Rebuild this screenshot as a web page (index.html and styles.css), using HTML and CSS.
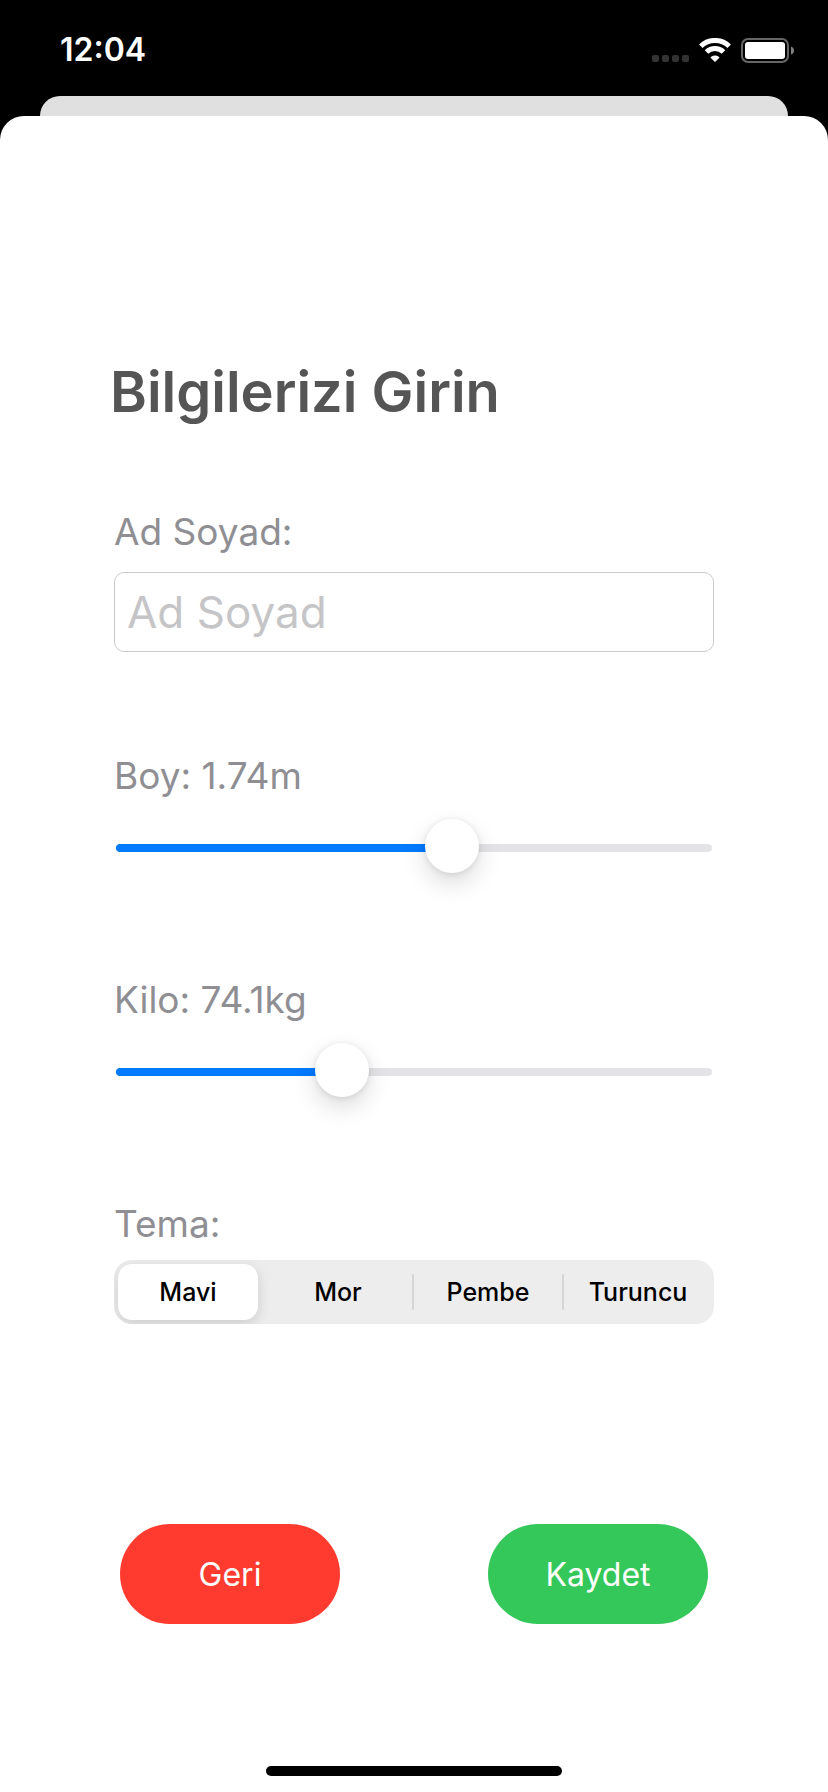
FILE: index.html
```html
<!DOCTYPE html>
<html lang="tr">
<head>
  <meta charset="utf-8">
  <meta name="viewport" content="width=device-width, initial-scale=1">
  <title>Bilgilerizi Girin</title>
  <link rel="stylesheet" href="styles.css">
</head>
<body>
  <header class="status-bar">
    <time class="clock">12:04</time>
    <div class="status-icons">
      <svg class="icon-signal" viewBox="0 0 37 24" aria-hidden="true">
        <rect x="0" y="17" width="7" height="7" rx="2"/>
        <rect x="10" y="17" width="7" height="7" rx="2"/>
        <rect x="20" y="17" width="7" height="7" rx="2"/>
        <rect x="30" y="17" width="7" height="7" rx="2"/>
      </svg>
      <svg class="icon-wifi" viewBox="0 0 32 24" aria-hidden="true">
        <path class="wifi-arc" d="M1.8 8.2A20.4 20.4 0 0 1 30.2 8.2"/>
        <path class="wifi-arc" d="M7.5 14A12.2 12.2 0 0 1 24.5 14"/>
        <path class="wifi-dot" d="M16 24l-4.6-4.4q.2-.4.8-.8a6.4 6.4 0 0 1 7.600 0q.6.4.8.8z"/>
      </svg>
      <svg class="icon-battery" viewBox="0 0 53 25" aria-hidden="true">
        <rect class="battery-case" x="1" y="1" width="46" height="23" rx="6"/>
        <rect class="battery-level" x="4" y="4" width="40" height="17" rx="3"/>
        <path class="battery-cap" d="M50 8.500q3 1 3 4t-3 4z"/>
      </svg>
    </div>
  </header>

  <div class="sheet-behind"></div>

  <main class="sheet">
    <form class="form">
      <h1 class="title">Bilgilerizi Girin</h1>

      <div class="field">
        <label class="label" for="name">Ad Soyad:</label>
        <input class="text-input" id="name" type="text" placeholder="Ad Soyad">
      </div>

      <div class="field">
        <label class="label" for="height">Boy: 1.74m</label>
        <input class="slider" id="height" type="range" min="1" max="2.3" step="0.01" value="1.74" style="--fill: 57%">
      </div>

      <div class="field">
        <label class="label" for="weight">Kilo: 74.1kg</label>
        <input class="slider" id="weight" type="range" min="30" max="150" step="0.1" value="74.1" style="--fill: 37%">
      </div>

      <fieldset class="field theme">
        <legend class="label">Tema:</legend>
        <div class="segments">
          <label class="segment"><input class="segment-radio" type="radio" name="theme" checked><span class="segment-text">Mavi</span></label>
          <label class="segment"><input class="segment-radio" type="radio" name="theme"><span class="segment-text">Mor</span></label>
          <label class="segment"><input class="segment-radio" type="radio" name="theme"><span class="segment-text">Pembe</span></label>
          <label class="segment"><input class="segment-radio" type="radio" name="theme"><span class="segment-text">Turuncu</span></label>
        </div>
      </fieldset>

      <div class="actions">
        <button class="button button-back" type="button">Geri</button>
        <button class="button button-save" type="button">Kaydet</button>
      </div>
    </form>
    <div class="home-indicator"></div>
  </main>
</body>
</html>
```

FILE: styles.css
```css
* {
  box-sizing: border-box;
}

body {
  margin: 0;
  min-height: 100vh;
  display: flex;
  flex-direction: column;
  background: #000;
  font-family: Inter, "Liberation Sans", sans-serif;
}

/* Status bar */
.status-bar {
  display: flex;
  justify-content: space-between;
  align-items: center;
  height: 96px;
  padding: 4px 34px 0 60px;
  color: #fff;
}

.clock {
  font-size: 32px;
  line-height: 40px;
  font-weight: 600;
}

.status-icons {
  display: flex;
  align-items: center;
  gap: 10px;
}

.icon-signal {
  width: 37px;
  height: 24px;
  fill: #333;
}

.icon-wifi {
  width: 32px;
  height: 24px;
}

.wifi-arc {
  fill: none;
  stroke: #fff;
  stroke-width: 5;
}

.wifi-dot,
.battery-level {
  fill: #fff;
}

.icon-battery {
  width: 53px;
  height: 25px;
}

.battery-case {
  fill: none;
  stroke: #666;
  stroke-width: 2;
}

.battery-cap {
  fill: #808080;
}

/* Sheets */
.sheet-behind {
  height: 20px;
  margin: 0 40px;
  border-radius: 20px 20px 0 0;
  background: #e0e0e0;
}

.sheet {
  flex: 1;
  display: flex;
  flex-direction: column;
  justify-content: space-between;
  padding: 240px 0 16px;
  border-radius: 24px 24px 0 0;
  background: #fff;
}

.form {
  padding: 0 110px;
}

.title {
  margin: 0 0 80px;
  font-size: 56px;
  line-height: 72px;
  font-weight: 600;
  color: #555;
}

.field {
  display: flex;
  flex-direction: column;
  gap: 16px;
  margin: 0 4px 96px;
}

.label {
  padding: 0;
  font-size: 37px;
  line-height: 48px;
  color: #8e8e93;
}

.text-input {
  width: 100%;
  height: 80px;
  margin-bottom: 4px;
  padding: 0 12px;
  border: 1px solid #ccc;
  border-radius: 10px;
  background: #fff;
  font-family: inherit;
  font-size: 44px;
  color: #000;
}

.text-input::placeholder {
  color: #c5c5c7;
  opacity: 1;
}

/* Sliders */
.slider {
  appearance: none;
  height: 64px;
  margin: 0 2px;
  background: transparent;
}

.slider::-webkit-slider-runnable-track {
  height: 8px;
  border-radius: 4px;
  background: linear-gradient(to right, #007aff var(--fill), #e4e4e6 var(--fill));
}

.slider::-webkit-slider-thumb {
  appearance: none;
  width: 54px;
  height: 54px;
  margin-top: -25px;
  border-radius: 50%;
  background: #fff;
  box-shadow: 0 10px 24px rgba(0, 0, 0, 0.14), 0 1px 6px rgba(0, 0, 0, 0.1);
}

/* Segmented control */
.theme {
  display: block;
  min-width: 0;
  margin-bottom: 200px;
  padding: 0;
  border: 0;
}

.segments {
  display: grid;
  grid-template-columns: repeat(4, 1fr);
  height: 64px;
  margin-top: 12px;
  border-radius: 18px;
  background: #ededee;
  overflow: hidden;
}

.segment {
  position: relative;
  display: flex;
  align-items: center;
}

.segment::after {
  content: "";
  width: 2px;
  height: 36px;
  border-radius: 1px;
}

.segment:nth-child(2)::after,
.segment:nth-child(3)::after {
  background: #d5d5d7;
}

.segment-radio {
  position: absolute;
  margin: 0;
  opacity: 0;
}

.segment-text {
  flex: 1;
  margin: 4px;
  border-radius: 14px;
  font-size: 25px;
  line-height: 56px;
  font-weight: 500;
  text-align: center;
  color: #000;
}

.segment-radio:checked + .segment-text {
  background: #fff;
  box-shadow: 0 4px 14px rgba(0, 0, 0, 0.14);
}

/* Buttons */
.actions {
  display: flex;
  justify-content: space-between;
  padding: 0 10px;
}

.button {
  width: 220px;
  height: 100px;
  padding: 0;
  border: 0;
  border-radius: 50px;
  font-family: inherit;
  font-size: 32px;
  color: #fff;
}

.button-back {
  background: #ff3b30;
}

.button-save {
  background: #34c759;
}

.home-indicator {
  width: 296px;
  height: 10px;
  margin: 0 auto;
  border-radius: 5px;
  background: #000;
}
```
